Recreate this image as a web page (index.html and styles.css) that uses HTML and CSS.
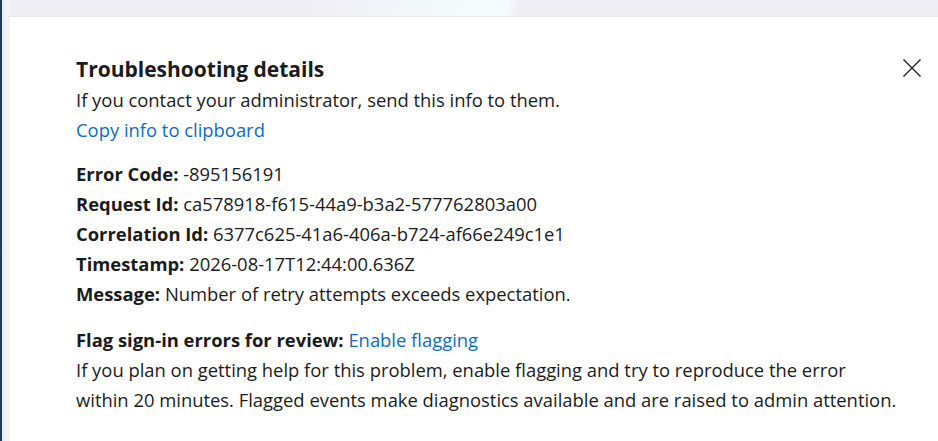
FILE: index.html
```html
<!DOCTYPE html>
<html>
<head>
<meta charset="utf-8">
<link rel="stylesheet" href="styles.css">
</head>
<body>
<div class="screen">
  <div class="edge"></div>
  <div class="main">
    <div class="topband"><div class="glow"></div></div>
    <div class="panel">
      <div class="content">
        <div class="head">
          <h1 class="title">Troubleshooting details</h1>
          <button class="close" aria-label="Close">
            <svg width="18" height="18" viewBox="0 0 18 18"><path d="M0.5 0.5 L17.5 17.5 M17.5 0.5 L0.5 17.5" stroke="#242424" stroke-width="1.4" fill="none"/></svg>
          </button>
        </div>
        <p class="line">If you contact your administrator, send this info to them.</p>
        <p class="line"><a class="link" href="#">Copy info to clipboard</a></p>
        <div class="details">
          <p class="line"><b>Error Code:</b> -895156191</p>
          <p class="line"><b>Request Id:</b> ca578918-f615-44a9-b3a2-577762803a00</p>
          <p class="line"><b>Correlation Id:</b> 6377c625-41a6-406a-b724-af66e249c1e1</p>
          <p class="line"><b>Timestamp:</b> 2026-08-17T12:44:00.636Z</p>
          <p class="line"><b>Message:</b> Number of retry attempts exceeds expectation.</p>
        </div>
        <div class="flag">
          <p class="line"><b>Flag sign-in errors for review:</b> <a class="link" href="#">Enable flagging</a></p>
          <p class="para">If you plan on getting help for this problem, enable flagging and try to reproduce the error<br>within 20 minutes. Flagged events make diagnostics available and are raised to admin attention.</p>
        </div>
      </div>
    </div>
  </div>
</div>
</body>
</html>
```
FILE: styles.css
```css
* { box-sizing: border-box; }
html, body { margin: 0; padding: 0; }
body {
  width: 938px;
  height: 441px;
  overflow: hidden;
  font-family: "Open Sans", "Noto Sans", sans-serif;
  color: #1b1b1b;
  background: #ffffff;
}
.screen {
  display: flex;
  height: 441px;
}
.edge {
  width: 10px;
  flex: none;
  background: linear-gradient(to right, #23385c 0, #23385c 2px, #e9ecef 2px, #f4f5f6 10px);
}
.main {
  flex: 1;
  display: flex;
  flex-direction: column;
}
.topband {
  height: 17px;
  flex: none;
  background: #f0eef5;
  position: relative;
  overflow: hidden;
  border-bottom: 1px solid #e9e7ef;
}
.glow {
  position: absolute;
  left: 300px;
  top: 0;
  width: 230px;
  height: 17px;
  background: linear-gradient(100deg, rgba(244,252,253,0) 0%, #f3fafc 55%, #f2fbfd 85%, rgba(240,238,245,0) 90%);
}
.panel {
  flex: 1;
  background: #ffffff;
}
.content {
  padding: 38px 17px 0 66px;
}
.head {
  display: flex;
  justify-content: space-between;
  align-items: flex-start;
}
.title {
  margin: 0;
  font-size: 21px;
  font-weight: 700;
  line-height: 29px;
  color: #1b1b1b;
}
.close {
  border: none;
  background: none;
  padding: 0;
  margin-top: 4px;
  width: 18px;
  height: 18px;
  display: flex;
}
.line, .para {
  margin: 0;
  font-size: 18.4px;
  line-height: 30px;
}
.head + .line { margin-top: 1px; }
.line b, .para b { font-weight: 700; }
.link {
  color: #0f6cbd;
  text-decoration: none;
}
.details { margin-top: 14px; }
.flag { margin-top: 16px; }
.para { max-width: 860px; }
```
